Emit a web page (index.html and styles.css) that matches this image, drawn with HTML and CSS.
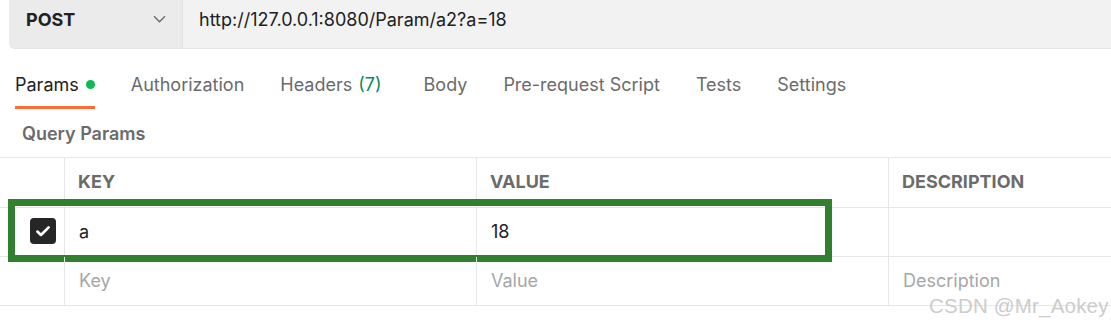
FILE: index.html
```html
<!DOCTYPE html>
<html lang="en">
<head>
    <meta charset="UTF-8">
    <title>Postman - Params</title>
    <link rel="stylesheet" href="styles.css">
</head>
<body>
    <div class="url-bar">
        <div class="method">
            <span>POST</span>
            <svg class="chevron" width="13" height="8" viewBox="0 0 13 8"><path d="M1 1.2l5.5 5.5 5.5-5.5" fill="none" stroke="#6b6b6b" stroke-width="1.4"/></svg>
        </div>
        <div class="url">http://127.0.0.1:8080/Param/a2?a=18</div>
    </div>

    <div class="tabs">
        <div class="tab active">Params <span class="dot"></span></div>
        <div class="tab">Authorization</div>
        <div class="tab">Headers <span class="count">(7)</span></div>
        <div class="tab tab-body">Body</div>
        <div class="tab">Pre-request Script</div>
        <div class="tab">Tests</div>
        <div class="tab">Settings</div>
    </div>

    <div class="section-title">Query Params</div>

    <div class="params-table">
        <div class="row head">
            <div class="cell check"></div>
            <div class="cell">KEY</div>
            <div class="cell">VALUE</div>
            <div class="cell">DESCRIPTION</div>
        </div>
        <div class="row filled">
            <div class="cell check"><span class="checkbox"><svg width="18" height="18" viewBox="0 0 16 16"><path d="M3 8.5l3.2 3L13 4.8" fill="none" stroke="#fff" stroke-width="2.4" stroke-linecap="round" stroke-linejoin="round"/></svg></span></div>
            <div class="cell">a</div>
            <div class="cell">18</div>
            <div class="cell"></div>
            <div class="highlight"></div>
        </div>
        <div class="row empty">
            <div class="cell check"></div>
            <div class="cell">Key</div>
            <div class="cell">Value</div>
            <div class="cell">Description</div>
        </div>
    </div>

    <div class="watermark">CSDN @Mr_Aokey</div>
</body>
</html>
```

FILE: styles.css
```css
* {
    box-sizing: border-box;
    margin: 0;
    padding: 0;
}

html, body {
    height: 100%;
    overflow: hidden;
}

body {
    position: relative;
    background-color: #ffffff;
    font-family: Inter, "Noto Sans", sans-serif;
    font-size: 18px;
    color: #212121;
}

.url-bar {
    display: flex;
    height: 49px;
    margin-left: 9px;
    background-color: #f2f2f2;
    border-bottom: 1px solid #e4e4e4;
    border-bottom-left-radius: 6px;
    overflow: hidden;
}

.method {
    width: 174px;
    display: flex;
    align-items: center;
    justify-content: space-between;
    padding: 0 16px 10px 17px;
    background-color: #ebebeb;
    border-right: 1px solid #e2e2e2;
    font-weight: 700;
}

.url {
    display: flex;
    align-items: center;
    padding: 0 0 10px 16px;
}

.tabs {
    display: flex;
    gap: 36px;
    margin-top: 21px;
    padding-left: 15px;
}

.tab {
    display: flex;
    align-items: center;
    height: 39px;
    padding-bottom: 8px;
    color: #6b6b6b;
    border-bottom: 3px solid transparent;
}

.tab.active {
    color: #212121;
    border-bottom-color: #ff6c37;
}

.tab-body {
    margin-left: 6px;
}

.dot {
    width: 9px;
    height: 9px;
    margin-left: 7px;
    border-radius: 50%;
    background-color: #0cbb52;
}

.count {
    margin-left: 6px;
    color: #0a8a5a;
}

.section-title {
    padding: 14px 0 0 22px;
    height: 48px;
    font-weight: 600;
    color: #6b6b6b;
}

.params-table {
    border-top: 1px solid #e6e6e6;
}

.row {
    position: relative;
    display: grid;
    grid-template-columns: 64px 412px 412px 1fr;
    height: 49px;
    border-bottom: 1px solid #e6e6e6;
}

.row.head {
    height: 50px;
}

.cell {
    display: flex;
    align-items: center;
    padding: 0 0 2px 13px;
    border-left: 1px solid #e6e6e6;
}

.cell.check {
    border-left: none;
    padding-left: 30px;
}

.head .cell {
    font-weight: 700;
    color: #6b6b6b;
}

.filled .cell,
.empty .cell {
    padding-left: 14px;
}

.filled .cell.check {
    padding-left: 30px;
}

.empty .cell {
    color: #a6a6a6;
}

.checkbox {
    display: flex;
    align-items: center;
    justify-content: center;
    width: 26px;
    height: 26px;
    border-radius: 4px;
    background-color: #262626;
}

/* green annotation box drawn over the filled row */
.highlight {
    position: absolute;
    left: 8px;
    top: -9px;
    width: 824px;
    height: 63px;
    border: 7px solid #31802f;
}

.watermark {
    position: absolute;
    left: 929px;
    top: 294px;
    white-space: nowrap;
    font-family: "Liberation Sans", Arial, sans-serif;
    font-size: 20.5px;
    color: #cccccc;
    letter-spacing: 0.2px;
}
```
